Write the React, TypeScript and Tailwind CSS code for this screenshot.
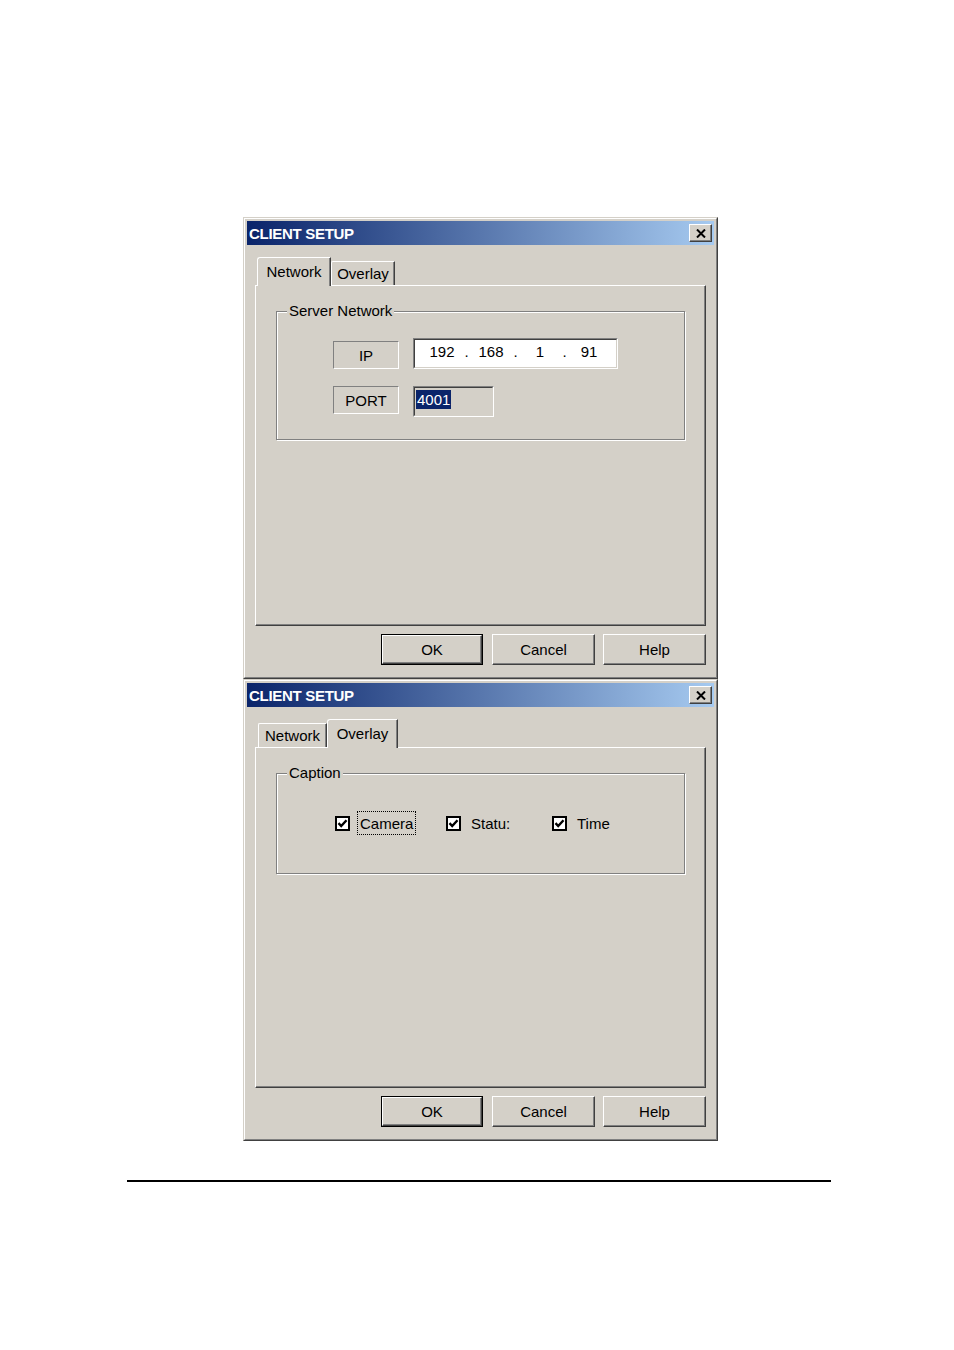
import React from "react";

function CloseButton() {
  return (
    <div className="w-[23px] h-[18px] bg-[#d4d0c8] border border-t-white border-l-white border-r-[#404040] border-b-[#404040] shadow-[inset_-1px_-1px_0_#808080] flex items-center justify-center">
      <svg width="10" height="9" viewBox="0 0 10 9">
        <path d="M1 0.5 L9 8.5 M9 0.5 L1 8.5" stroke="#000" strokeWidth="2" fill="none" />
      </svg>
    </div>
  );
}

function TitleBar() {
  return (
    <div className="h-[24px] flex items-center justify-between pl-[2px] pr-[2px] bg-[linear-gradient(to_right,#0a246a,#a6caf0)]">
      <span className="text-white font-bold text-[15px] leading-none tracking-[-0.3px]">CLIENT SETUP</span>
      <CloseButton />
    </div>
  );
}

function Tab({ label, active, width, ml }: { label: string; active: boolean; width: string; ml: string }) {
  if (active) {
    return (
      <div
        className={`${width} ${ml} h-[29px] -mb-px relative z-10 bg-[#d4d0c8] border-l border-t border-t-white border-l-white border-r border-r-[#404040] shadow-[inset_-1px_0_0_#808080] rounded-tl-[3px] flex items-center justify-center text-[15px] leading-none pb-[2px]`}
      >
        {label}
      </div>
    );
  }
  return (
    <div
      className={`${width} ${ml} h-[24px] bg-[#d4d0c8] border-l border-t border-t-white border-l-white border-r border-r-[#404040] shadow-[inset_-1px_0_0_#808080] rounded-tl-[2px] flex items-center justify-center text-[15px] leading-none`}
    >
      {label}
    </div>
  );
}

function Button({ label, def, width, ml }: { label: string; def?: boolean; width: string; ml: string }) {
  if (def) {
    return (
      <div className={`${width} ${ml} h-[31px] border border-black`}>
        <div className="h-full border border-t-white border-l-white border-r-[#404040] border-b-[#404040] shadow-[inset_-1px_-1px_0_#808080] flex items-center justify-center text-[15px] leading-none">
          {label}
        </div>
      </div>
    );
  }
  return (
    <div
      className={`${width} ${ml} h-[31px] border border-t-white border-l-white border-r-[#404040] border-b-[#404040] shadow-[inset_-1px_-1px_0_#808080] flex items-center justify-center text-[15px] leading-none`}
    >
      {label}
    </div>
  );
}

function GroupBox({ label, height, children }: { label: string; height: string; children: React.ReactNode }) {
  return (
    <div className={`relative ml-[20px] mt-[25px] w-[409px] ${height} border border-[#808080] shadow-[inset_1px_1px_0_#fff,1px_1px_0_#fff]`}>
      <span className="absolute -top-[10px] left-[10px] px-[2px] bg-[#d4d0c8] text-[15px] leading-[18px]">{label}</span>
      {children}
    </div>
  );
}

function Window({ tab, children }: { tab: "network" | "overlay"; children: React.ReactNode }) {
  return (
    <div className="ml-[243px] w-[475px] h-[462px] bg-[#d4d0c8] border border-t-[#d4d0c8] border-l-[#d4d0c8] border-r-[#404040] border-b-[#404040]">
      <div className="h-full border border-t-white border-l-white border-r-[#808080] border-b-[#808080] p-[2px] flex flex-col">
        <TitleBar />
        <div className="px-[8px] mt-[12px]">
          <div className="h-[28px] flex items-end">
            {tab === "network" ? (
              <>
                <Tab label="Network" active width="w-[74px]" ml="ml-[2px]" />
                <Tab label="Overlay" active={false} width="w-[64px]" ml="ml-0" />
              </>
            ) : (
              <>
                <Tab label="Network" active={false} width="w-[69px]" ml="ml-[3px]" />
                <Tab label="Overlay" active width="w-[71px]" ml="ml-0" />
              </>
            )}
          </div>
          <div className="h-[341px] border border-t-white border-l-white border-r-[#404040] border-b-[#404040] shadow-[inset_-1px_-1px_0_#808080]">
            {children}
          </div>
          <div className="mt-[8px] flex justify-end">
            <Button label="OK" def width="w-[102px]" ml="ml-0" />
            <Button label="Cancel" width="w-[103px]" ml="ml-[9px]" />
            <Button label="Help" width="w-[103px]" ml="ml-[8px]" />
          </div>
        </div>
      </div>
    </div>
  );
}

function StaticLabel({ text, h, mt }: { text: string; h: string; mt: string }) {
  return (
    <div className={`w-[66px] ${h} ${mt} border border-t-[#808080] border-l-[#808080] border-r-white border-b-white flex items-center justify-center text-[15px] leading-none`}>
      {text}
    </div>
  );
}

function Sunken({ className, children }: { className: string; children: React.ReactNode }) {
  return (
    <div className={`${className} border border-t-[#808080] border-l-[#808080] border-r-white border-b-white`}>
      <div className="h-full border border-t-[#404040] border-l-[#404040] border-r-[#d4d0c8] border-b-[#d4d0c8] flex items-center">
        {children}
      </div>
    </div>
  );
}

function NetworkContent() {
  return (
    <GroupBox label="Server Network" height="h-[129px]">
      <div className="pl-[56px] pt-[26px]">
        <div className="flex items-start">
          <StaticLabel text="IP" h="h-[28px]" mt="mt-[3px]" />
          <Sunken className="ml-[14px] w-[205px] h-[31px] bg-white">
            <div className="flex items-center pl-[7px] text-[15px] leading-none pb-[5px]">
              <span className="w-[40px] text-center">192</span>
              <span className="w-[9px] text-center">.</span>
              <span className="w-[40px] text-center">168</span>
              <span className="w-[9px] text-center">.</span>
              <span className="w-[40px] text-center">1</span>
              <span className="w-[9px] text-center">.</span>
              <span className="w-[40px] text-center">91</span>
            </div>
          </Sunken>
        </div>
        <div className="flex items-start mt-[17px]">
          <StaticLabel text="PORT" h="h-[28px]" mt="mt-0" />
          <Sunken className="ml-[14px] w-[81px] h-[31px] bg-[#d4d0c8]">
            <span className="ml-[1px] mb-[4px] bg-[#0a246a] text-white text-[15px] leading-[19px] px-[1px]">4001</span>
          </Sunken>
        </div>
      </div>
    </GroupBox>
  );
}

function CheckBox() {
  return (
    <div className="w-[15px] h-[15px] border-2 border-black bg-white flex items-center justify-center">
      <svg width="11" height="11" viewBox="0 0 11 11">
        <path d="M1.5 5.2 L4.2 8 L9.5 2.2" stroke="#000" strokeWidth="2.4" fill="none" />
      </svg>
    </div>
  );
}

function OverlayContent() {
  return (
    <GroupBox label="Caption" height="h-[101px]">
      <div className="pl-[58px] pt-[37px] flex items-center">
        <div className="w-[111px] flex items-center">
          <CheckBox />
          <span className="ml-[7px] border border-dotted border-black px-[2px] h-[24px] flex items-center text-[15px] leading-none">Camera</span>
        </div>
        <div className="w-[106px] flex items-center">
          <CheckBox />
          <span className="ml-[10px] text-[15px] leading-none">Statu:</span>
        </div>
        <div className="flex items-center">
          <CheckBox />
          <span className="ml-[10px] text-[15px] leading-none">Time</span>
        </div>
      </div>
    </GroupBox>
  );
}

export default function App() {
  return (
    <div className="w-[954px] min-h-[1350px] bg-white text-black font-['Liberation_Sans',Arial,sans-serif] pt-[217px] flex flex-col">
      <Window tab="network">
        <NetworkContent />
      </Window>
      <Window tab="overlay">
        <OverlayContent />
      </Window>
      <div className="ml-[127px] mt-[39px] w-[704px] h-[2px] bg-black" />
    </div>
  );
}
